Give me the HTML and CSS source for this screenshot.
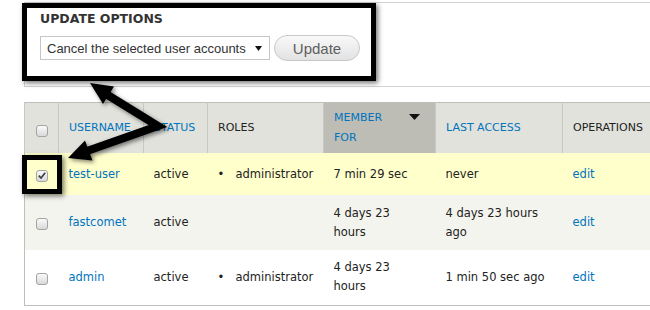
FILE: index.html
```html
<!DOCTYPE html>
<html lang="en">
<head>
    <meta charset="UTF-8">
    <meta name="viewport" content="width=device-width, initial-scale=1.0">
    <title>People</title>
    <link rel="stylesheet" href="styles.css">
</head>
<body>
<div class="page">

    <div class="options">
        <h2 class="options-title">UPDATE OPTIONS</h2>
        <div class="options-row">
            <div class="select">
                <span>Cancel the selected user accounts</span>
                <svg class="select-arrow" width="7" height="5" viewBox="0 0 7 5"><path d="M0 0H7L3.5 5Z"/></svg>
            </div>
            <button class="button">Update</button>
        </div>
    </div>

    <table class="users">
        <colgroup>
            <col style="width: 34px">
            <col style="width: 85px">
            <col style="width: 64px">
            <col style="width: 116px">
            <col style="width: 112px">
            <col style="width: 127px">
            <col style="width: 120px">
        </colgroup>
        <thead>
            <tr>
                <th class="col-check"><span class="check"></span></th>
                <th><a href="#">USERNAME</a></th>
                <th><a href="#">STATUS</a></th>
                <th>ROLES</th>
                <th class="is-sorted">
                    <div class="sort-head">
                        <a href="#">MEMBER<br>FOR</a>
                        <svg class="sort-arrow" width="11" height="6" viewBox="0 0 11 6"><path d="M0 0H11L5.5 6Z"/></svg>
                    </div>
                </th>
                <th><a href="#">LAST ACCESS</a></th>
                <th>OPERATIONS</th>
            </tr>
        </thead>
        <tbody>
            <tr class="row-selected">
                <td class="col-check">
                    <span class="check is-checked">
                        <svg width="8" height="7" viewBox="0 0 8 7"><path d="M0.8 3.6L3 6L7.2 0.8" fill="none" stroke="#444" stroke-width="1.8"/></svg>
                    </span>
                </td>
                <td><a href="#">test-user</a></td>
                <td>active</td>
                <td class="col-roles"><ul class="roles"><li>administrator</li></ul></td>
                <td class="col-member">7 min 29 sec</td>
                <td>never</td>
                <td><a href="#">edit</a></td>
            </tr>
            <tr class="row-even">
                <td class="col-check"><span class="check"></span></td>
                <td><a href="#">fastcomet</a></td>
                <td>active</td>
                <td class="col-roles"></td>
                <td class="col-member">4 days 23 hours</td>
                <td>4 days 23 hours ago</td>
                <td><a href="#">edit</a></td>
            </tr>
            <tr class="row-odd">
                <td class="col-check"><span class="check"></span></td>
                <td><a href="#">admin</a></td>
                <td>active</td>
                <td class="col-roles"><ul class="roles"><li>administrator</li></ul></td>
                <td class="col-member">4 days 23 hours</td>
                <td>1 min 50 sec ago</td>
                <td><a href="#">edit</a></td>
            </tr>
        </tbody>
    </table>

    <!-- annotations drawn over the screenshot -->
    <div class="callout callout-options"></div>
    <div class="callout callout-check"></div>
    <svg class="pointer" width="650" height="310" viewBox="0 0 650 310">
        <polyline points="106,94 158,126 87,151" fill="none" stroke="#000" stroke-width="8" stroke-linejoin="miter"/>
        <polygon points="90,83 114,86.5 103,104"/>
        <polygon points="68,158 85,140.5 92.5,160.5"/>
    </svg>
</div>
</body>
</html>
```

FILE: styles.css
```css
body {
    margin: 0;
    font-family: "DejaVu Sans", Verdana, sans-serif;
    color: #333;
    background-color: #fff;
    overflow: hidden;
}

.page {
    position: relative;
    width: 650px;
    height: 310px;
    box-sizing: border-box;
    padding: 2px 0 0 24px;
    overflow: hidden;
}

a {
    color: #0074bd;
    text-decoration: none;
}

/* update options fieldset */
.options {
    width: 700px;
    height: 85px;
    box-sizing: border-box;
    border: 1px solid #d2d2d2;
    padding: 8px 0 0 15px;
}

.options-title {
    margin: 0;
    font-size: 12.5px;
    line-height: 16px;
    font-weight: bold;
    color: #333;
}

.options-row {
    display: flex;
    align-items: center;
    gap: 4px;
    margin-top: 8px;
}

.select {
    display: flex;
    align-items: center;
    justify-content: space-between;
    width: 230px;
    height: 24px;
    box-sizing: border-box;
    border: 1px solid #c6c6c6;
    padding: 0 7px 0 6px;
    font-family: "Liberation Sans", Arial, sans-serif;
    font-size: 13px;
    color: #333;
    background-color: #fff;
}

.select-arrow {
    fill: #111;
}

.button {
    width: 86px;
    height: 26px;
    padding: 0;
    border: 1px solid #c8c8c8;
    border-radius: 13px;
    background: linear-gradient(#f9f9f9, #e2e2e2);
    font-family: "Liberation Sans", Arial, sans-serif;
    font-size: 15px;
    color: #5e5e5e;
}

/* users table */
.users {
    margin-top: 15px;
    width: 658px;
    table-layout: fixed;
    border-collapse: collapse;
    border: 1px solid #bebfb9;
    font-size: 11.5px;
}

.users th {
    height: 45px;
    padding: 0 10px;
    background-color: #e1e2dc;
    border-left: 1px solid #c8c9c3;
    border-right: 1px solid #c8c9c3;
    font-size: 11px;
    font-weight: normal;
    line-height: 20px;
    text-align: left;
    color: #222;
}

.users th.is-sorted {
    background-color: #bdbdb6;
    border-left: none;
    border-right: none;
    padding-right: 15px;
}

.sort-head {
    display: flex;
    justify-content: space-between;
    align-items: flex-start;
}

.sort-arrow {
    margin-top: 6px;
    fill: #111;
}

.users td {
    padding: 0 10px;
    line-height: 19px;
    vertical-align: middle;
    color: #222;
}

.users .col-check {
    padding: 3px 0 0;
    text-align: center;
}

.users th.col-check {
    padding-top: 5px;
}

.users td.col-roles {
    padding-right: 4px;
}

.users td.col-member {
    padding-right: 16px;
}

.row-selected { height: 42px; background-color: #ffffcc; }
.row-even { height: 55px; background-color: #f3f4ee; }
.row-odd { height: 55px; background-color: #fff; }

.check {
    display: inline-flex;
    align-items: center;
    justify-content: center;
    width: 12px;
    height: 12px;
    box-sizing: border-box;
    border: 1px solid #a4a4a4;
    border-radius: 3px;
    background: linear-gradient(#fafafa, #d9d9d9);
    vertical-align: middle;
}

.roles {
    margin: 0;
    padding: 0;
    list-style-type: none;
}

.roles li::before {
    content: "\2022";
    display: inline-block;
    width: 18px;
}

/* annotations */
.callout {
    position: absolute;
    box-sizing: border-box;
    border: 5px solid #000;
    box-shadow: 2px 2px 5px rgba(0, 0, 0, 0.55);
}

.callout-options {
    left: 22px;
    top: 3px;
    width: 354px;
    height: 78px;
}

.callout-check {
    left: 22px;
    top: 155px;
    width: 40px;
    height: 39px;
}

.pointer {
    position: absolute;
    left: 0;
    top: 0;
    pointer-events: none;
    filter: drop-shadow(2px 2px 2px rgba(0, 0, 0, 0.5));
}
```
